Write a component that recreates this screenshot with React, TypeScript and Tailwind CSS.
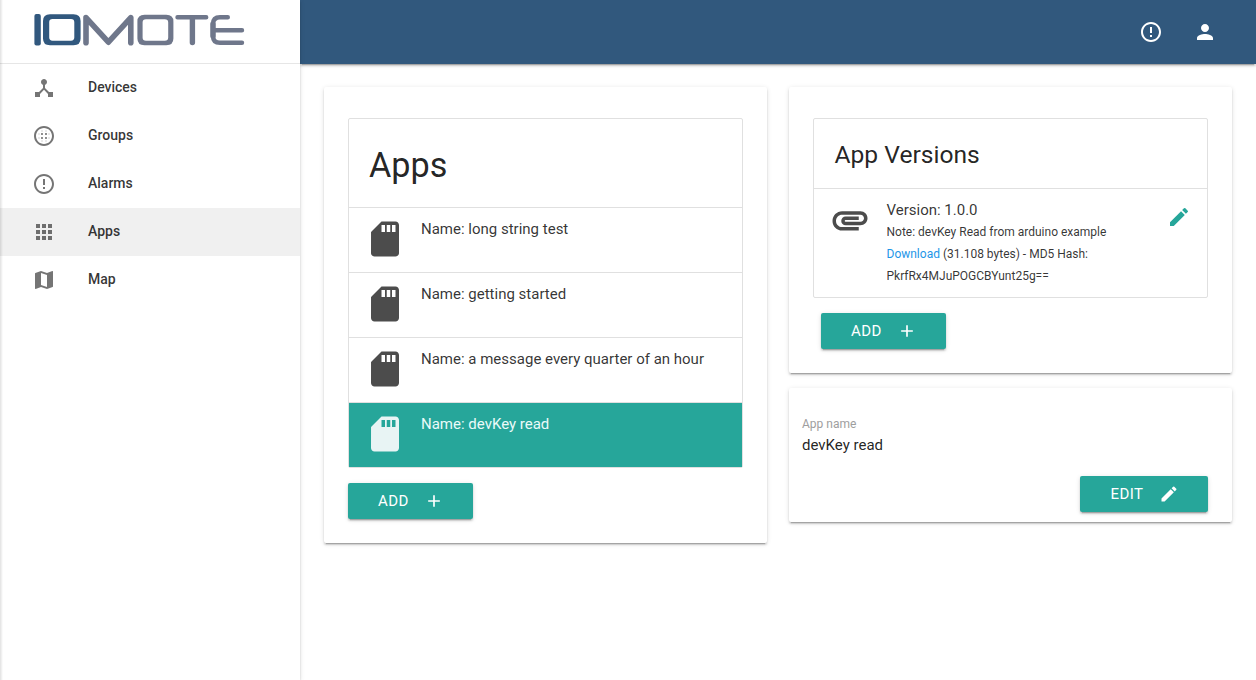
import {
  MdAdd,
  MdApps,
  MdAttachment,
  MdBlurCircular,
  MdDeviceHub,
  MdEdit,
  MdErrorOutline,
  MdMap,
  MdPerson,
  MdSdCard,
} from "react-icons/md";
import type { ComponentType, ReactNode } from "react";

type Icon = ComponentType<{ className?: string }>;

const shadow =
  "shadow-[0_2px_2px_0_rgba(0,0,0,0.14),0_1px_5px_0_rgba(0,0,0,0.12),0_3px_1px_-2px_rgba(0,0,0,0.2)]";

const navItems: { label: string; icon: Icon; active?: boolean }[] = [
  { label: "Devices", icon: MdDeviceHub },
  { label: "Groups", icon: MdBlurCircular },
  { label: "Alarms", icon: MdErrorOutline },
  { label: "Apps", icon: MdApps, active: true },
  { label: "Map", icon: MdMap },
];

const apps = [
  { name: "long string test" },
  { name: "getting started" },
  { name: "a message every quarter of an hour" },
  { name: "devKey read", active: true },
];

function Logo() {
  return (
    <svg
      className="block h-[34px] w-[212px]"
      viewBox="34 13 212 34"
      fill="none"
      strokeLinecap="round"
      strokeLinejoin="round"
      role="img"
      aria-label="IOMOTE"
    >
      <g fill="#31587e">
        <rect x="34.4" y="14" width="6.4" height="31.6" rx="2" />
        <path
          fillRule="evenodd"
          d="M50 14.2H73.5Q80.6 14.2 80.6 21V38.5Q80.6 45.3 73.5 45.3H50Q43 45.3 43 38.5V21Q43 14.2 50 14.2ZM52.5 19Q49.2 19 49.2 22.2V37.6Q49.2 40.7 52.5 40.7H71Q74.3 40.7 74.3 37.6V22.2Q74.3 19 71 19Z"
        />
      </g>
      <path
        fill="#6f778b"
        fillRule="evenodd"
        d="M144.5 14.8H166.3Q173.4 14.8 173.4 21.5V38.5Q173.4 45.2 166.3 45.2H144.5Q137.4 45.2 137.4 38.5V21.5Q137.4 14.8 144.5 14.8ZM146 19.2Q142.6 19.2 142.6 22.4V37.6Q142.6 40.8 146 40.8H164.8Q168.2 40.8 168.2 37.6V22.4Q168.2 19.2 164.8 19.2Z"
      />
      <g stroke="#6f778b">
        <path strokeWidth="5.6" d="M86 42.8V17.6L108.4 42.2L130.8 17.6V42.8" />
        <path
          strokeWidth="4.4"
          d="M177.5 17.2H206.2M227.8 17.2H220Q213 17.2 213 24V36Q213 42.8 220 42.8H242M215 30.3H242"
        />
        <path strokeWidth="5.4" d="M192.4 18V42.6M213 24V36" />
      </g>
    </svg>
  );
}

function Button({ label, icon: I, size }: { label: string; icon: Icon; size: string }) {
  return (
    <button
      className={`flex h-9 items-center justify-between rounded-[2px] bg-[#26a69a] text-[15px] tracking-[0.4px] text-white ${size} ${shadow}`}
    >
      {label}
      <I className="size-5" />
    </button>
  );
}

function Card({ className, children }: { className: string; children: ReactNode }) {
  return <section className={`rounded-[2px] bg-white ${shadow} ${className}`}>{children}</section>;
}

export default function App() {
  return (
    <div className="flex h-[680px] w-[1256px] overflow-hidden bg-white font-[Roboto,sans-serif] text-[15px] leading-[22px] text-black/87">
      <aside className={`relative z-10 w-[300px] shrink-0 bg-white ${shadow}`}>
        <div className="h-16 border-b border-[#e6e6e6] pt-[13px] pl-[34px]">
          <Logo />
        </div>
        <nav>
          {navItems.map(({ label, icon: I, active }) => (
            <a
              key={label}
              className={`flex h-12 items-center pl-8 text-sm font-medium text-black/80 ${active ? "bg-[#f0f0f0]" : ""}`}
            >
              <I className="mr-8 size-6 text-black/54" />
              <span className="pb-0.5">{label}</span>
            </a>
          ))}
        </nav>
        <div className="pointer-events-none absolute inset-y-0 left-0 w-[3px] bg-linear-to-r from-black/12 to-transparent" />
      </aside>

      <div className="flex-1">
        <header className={`flex h-16 items-center justify-end gap-[30px] bg-[#31587d] pr-[39px] text-white ${shadow}`}>
          <MdErrorOutline className="size-6" />
          <MdPerson className="size-6" />
        </header>

        <main className="flex items-start gap-[22px] pt-[23px] pl-6">
          <Card className="h-[456px] w-[443px] px-6 pt-[31px]">
            <div className="mb-[15px] w-[395px] rounded-[2px] border border-[#e0e0e0]">
              <h4 className="h-[88px] pt-[27px] pl-5 text-[34.2px] leading-[38px]">Apps</h4>
              {apps.map(({ name, active }) => (
                <div
                  key={name}
                  className={`flex h-[65px] items-start border-t border-[#e0e0e0] pt-[10px] pl-[15px] ${
                    active ? "bg-[#26a69a] bg-clip-padding text-[#eafaf9]" : "text-black/80"
                  }`}
                >
                  <MdSdCard className={`size-[42px] ${active ? "text-[#e8f4f4]" : "text-[#4c4c4c]"}`} />
                  <span className="ml-[15px]">Name: {name}</span>
                </div>
              ))}
            </div>
            <Button label="ADD" icon={MdAdd} size="w-[125px] pr-[29px] pl-[30px]" />
          </Card>

          <div className="flex flex-col gap-[15px]">
            <Card className="h-[286px] w-[443px] px-6 pt-[31px]">
              <div className="mb-[15px] h-[180px] w-[395px] rounded-[2px] border border-[#e0e0e0]">
                <h5 className="h-[69px] pt-[22px] pl-[20.5px] text-[24.6px] leading-[27px]">App Versions</h5>
                <div className="flex items-start border-t border-[#e0e0e0] pt-[10px] pl-[15px]">
                  <MdAttachment className="size-[42px] text-[#4c4c4c]" />
                  <div className="ml-[15.5px] w-[270px] text-black/80">
                    <p>Version: 1.0.0</p>
                    <p className="text-xs leading-[22px]">
                      Note: devKey Read from arduino example
                      <br />
                      <a className="text-[#1e96e8]">Download</a> (31.108 bytes) - MD5 Hash:
                      <br />
                      PkrfRx4MJuPOGCBYunt25g==
                    </p>
                  </div>
                  <MdEdit className="mt-[6px] ml-[10.5px] size-6 text-[#26a69a]" />
                </div>
              </div>
              <div className="pl-2">
                <Button label="ADD" icon={MdAdd} size="w-[125px] pr-[29px] pl-[30px]" />
              </div>
            </Card>

            <Card className="h-[134px] w-[443px] pt-[25px] pr-6 pl-[13px]">
              <p className="text-xs leading-[22px] text-[#9e9e9e]">App name</p>
              <p className="leading-5">devKey read</p>
              <div className="mt-[21px] flex justify-end">
                <Button label="EDIT" icon={MdEdit} size="w-32 pr-[29.5px] pl-[30.6px]" />
              </div>
            </Card>
          </div>
        </main>
      </div>
    </div>
  );
}
